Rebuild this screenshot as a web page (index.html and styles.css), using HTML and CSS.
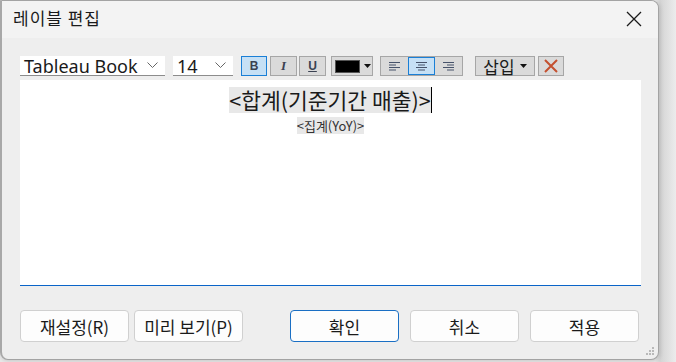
FILE: index.html
```html
<!DOCTYPE html>
<html>
<head>
    <title>레이블 편집</title>
    <link rel="stylesheet" href="styles.css">
</head>
<body>

<div class="dialog">
    <div class="titlebar">
        <span class="title">레이블 편집</span>
        <svg class="close" width="16" height="16" viewBox="0 0 16 16">
            <path d="M1 1 L15 15 M15 1 L1 15" stroke="#1a1a1a" stroke-width="1.3" fill="none"/>
        </svg>
    </div>

    <div class="content">
        <!-- Toolbar -->
        <div class="toolbar">
            <div class="combo font-combo">
                <span>Tableau Book</span>
                <svg width="11" height="7" viewBox="0 0 11 7"><path d="M0.5 0.5 L5.5 5.5 L10.5 0.5" stroke="#666" fill="none"/></svg>
            </div>
            <div class="combo size-combo">
                <span>14</span>
                <svg width="11" height="7" viewBox="0 0 11 7"><path d="M0.5 0.5 L5.5 5.5 L10.5 0.5" stroke="#666" fill="none"/></svg>
            </div>
            <div class="tool active bold-btn">B</div>
            <div class="tool italic-btn">I</div>
            <div class="tool underline-btn">U</div>
            <div class="tool color-btn">
                <span class="swatch"></span>
                <svg width="7" height="4" viewBox="0 0 7 4"><path d="M0 0 L7 0 L3.5 4 Z" fill="#111"/></svg>
            </div>
            <div class="align-group">
                <div class="tool align">
                    <svg width="11" height="9" viewBox="0 0 11 9"><path d="M0 0.5 H11 M0 3 H7 M0 5.5 H11 M0 8 H7" stroke="#47536b"/></svg>
                </div>
                <div class="tool align active">
                    <svg width="11" height="9" viewBox="0 0 11 9"><path d="M0 0.5 H11 M2 3 H9 M0 5.5 H11 M2 8 H9" stroke="#47536b"/></svg>
                </div>
                <div class="tool align">
                    <svg width="11" height="9" viewBox="0 0 11 9"><path d="M0 0.5 H11 M4 3 H11 M0 5.5 H11 M4 8 H11" stroke="#47536b"/></svg>
                </div>
            </div>
            <div class="tool insert-btn">
                <span>삽입</span>
                <svg width="7" height="4" viewBox="0 0 7 4"><path d="M0 0 L7 0 L3.5 4 Z" fill="#111"/></svg>
            </div>
            <div class="tool delete-btn">
                <svg width="14" height="14" viewBox="0 0 14 14"><path d="M1 1 L13 13 M13 1 L1 13" stroke="#c4502f" stroke-width="2" fill="none"/></svg>
            </div>
        </div>

        <!-- Editor -->
        <div class="editor">
            <div class="line line-big"><span class="field">&lt;합계(기준기간 매출)&gt;</span><span class="caret"></span></div>
            <div class="line line-small"><span class="field">&lt;집계(YoY)&gt;</span></div>
        </div>

        <!-- Buttons -->
        <div class="buttons">
            <div class="left-buttons">
                <div class="btn">재설정(R)</div>
                <div class="btn">미리 보기(P)</div>
            </div>
            <div class="right-buttons">
                <div class="btn primary">확인</div>
                <div class="btn">취소</div>
                <div class="btn">적용</div>
            </div>
        </div>
    </div>

    <svg class="grip" width="10" height="10" viewBox="0 0 10 10">
        <rect x="7" y="1" width="2" height="2" fill="#b8b8b8"/>
        <rect x="4" y="4" width="2" height="2" fill="#b8b8b8"/>
        <rect x="7" y="4" width="2" height="2" fill="#b8b8b8"/>
        <rect x="1" y="7" width="2" height="2" fill="#b8b8b8"/>
        <rect x="4" y="7" width="2" height="2" fill="#b8b8b8"/>
        <rect x="7" y="7" width="2" height="2" fill="#b8b8b8"/>
    </svg>
</div>

</body>
</html>
```

FILE: styles.css
```css
body {
    margin: 0;
    background: linear-gradient(to right, #e8e8e8 0, #e8e8e8 655px, #d4d4d4 660px, #ececec 676px);
    font-family: "Noto Sans", "Noto Sans CJK KR", sans-serif;
    color: #1a1a1a;
    width: 676px;
    height: 362px;
    overflow: hidden;
}
.dialog {
    position: relative;
    width: 659px;
    height: 360px;
    box-sizing: border-box;
    border: 1px solid #a3a3a3;
    border-left: 2px solid #a8a8a8;
    border-radius: 0 8px 8px 8px;
    background: #eeeeee;
    box-shadow: 1px 1px 4px rgba(0, 0, 0, 0.15);
    overflow: hidden;
}
.titlebar {
    height: 37px;
    background: #f3f3f3;
    display: flex;
    align-items: center;
    justify-content: space-between;
    padding: 0 16px 0 11px;
}
.title {
    font-family: "Noto Sans CJK KR", sans-serif;
    font-size: 17px;
    letter-spacing: 1px;
    position: relative;
    top: -2px;
}
.close {
    position: relative;
    top: -1px;
}
.content {
    padding: 18px 16px 0 18px;
}
/* Toolbar */
.toolbar {
    display: flex;
    align-items: center;
    height: 20px;
}
.combo {
    height: 20px;
    box-sizing: border-box;
    background: #fff;
    border-bottom: 1px solid #8c8c8c;
    display: flex;
    align-items: center;
    justify-content: space-between;
    padding: 0 7px 0 4px;
    font-size: 18px;
    color: #1a1a1a;
}
.font-combo {
    width: 145px;
}
.size-combo {
    width: 60px;
    margin-left: 8px;
}
.tool {
    height: 20px;
    width: 27px;
    box-sizing: border-box;
    border: 1px solid #a6a6a6;
    background: #dadada;
    display: flex;
    align-items: center;
    justify-content: center;
    font-size: 12px;
    color: #3b4252;
}
.tool.active {
    background: #c6e0f5;
    border-color: #1a7fd6;
}
.bold-btn {
    margin-left: 8px;
    font-weight: bold;
    font-family: "Liberation Sans", sans-serif;
    width: 26px;
}
.italic-btn {
    margin-left: 3px;
    font-style: italic;
    font-weight: bold;
    font-family: "Liberation Serif", serif;
    font-size: 13px;
}
.underline-btn {
    margin-left: 2px;
    text-decoration: underline;
    font-weight: bold;
    font-family: "Liberation Sans", sans-serif;
}
.color-btn {
    margin-left: 5px;
    width: 42px;
    justify-content: flex-start;
    padding-left: 3px;
    gap: 4px;
}
.swatch {
    width: 25px;
    height: 13px;
    background: #000;
    border: 1px solid #555;
    box-sizing: border-box;
}
.align-group {
    display: flex;
    margin-left: 7px;
    border: 1px solid #a6a6a6;
}
.tool.align {
    border: none;
    height: 18px;
}
.tool.align.active {
    border: 1px solid #1a7fd6;
}
.insert-btn {
    margin-left: 12px;
    width: 60px;
    gap: 5px;
    font-family: "Noto Sans CJK KR", sans-serif;
    font-size: 17px;
    color: #1a1a1a;
}
.delete-btn {
    margin-left: 3px;
    width: 26px;
}
/* Editor */
.editor {
    margin-top: 4px;
    width: 621px;
    height: 206px;
    box-sizing: border-box;
    background: #fff;
    border-bottom: 1px solid #0a64c8;
    padding-top: 7px;
    display: flex;
    flex-direction: column;
    align-items: center;
}
.line {
    display: flex;
    align-items: center;
}
.field {
    background: #e8e8e8;
    font-family: "Noto Sans CJK KR", sans-serif;
}
.line-big .field {
    font-size: 21.5px;
    line-height: 26px;
    height: 26px;
}
.caret {
    width: 1px;
    height: 26px;
    background: #000;
}
.line-small {
    margin-top: 4px;
}
.line-small .field {
    font-size: 13px;
    line-height: 17px;
    color: #333;
}
/* Buttons */
.buttons {
    margin-top: 24px;
    width: 619px;
    display: flex;
    justify-content: space-between;
}
.left-buttons {
    display: flex;
    gap: 5px;
}
.right-buttons {
    display: flex;
    gap: 11px;
}
.btn {
    width: 109px;
    height: 32px;
    box-sizing: border-box;
    background: #fdfdfd;
    border: 1px solid #d0d0d0;
    border-radius: 4px;
    display: flex;
    align-items: center;
    justify-content: center;
    font-family: "Noto Sans CJK KR", sans-serif;
    font-size: 17px;
    color: #1a1a1a;
}
.btn.primary {
    border: 1px solid #1a6fc4;
}
.grip {
    position: absolute;
    right: 3px;
    bottom: 3px;
}
```
